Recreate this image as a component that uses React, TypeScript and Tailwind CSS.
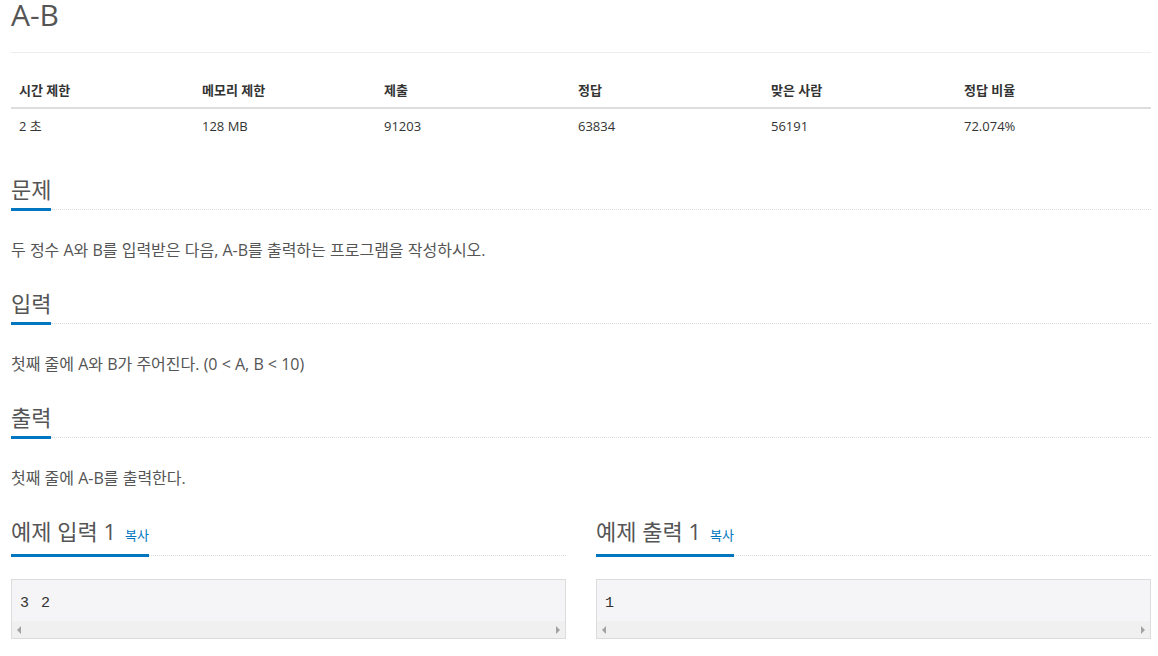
import React from "react";

const FONT = "font-['Open_Sans','Noto_Sans_CJK_KR',sans-serif]";

function Headline({ title, copy }: { title: string; copy?: boolean }) {
  return (
    <div className="flex items-end">
      <span className="border-b-[3px] border-[#0076c0] pb-[2px] text-[22px] leading-[34px] text-[#555] whitespace-nowrap">
        {title}
        {copy && <span className="ml-[9px] text-[13px] text-[#0076c0]">복사</span>}
      </span>
      <div className="flex-1 mb-[1px] border-b border-dotted border-[#d8dde3]" />
    </div>
  );
}

function Section({ title, text }: { title: string; text: string }) {
  return (
    <div className="pb-[25px]">
      <Headline title={title} />
      <p className="mt-[28px] text-[16px] leading-[22px] text-[#555]">{text}</p>
    </div>
  );
}

function Tri({ dir }: { dir: "l" | "r" }) {
  return (
    <svg width="4" height="8" viewBox="0 0 4 8">
      {dir === "l" ? <path d="M4 0 L0 4 L4 8 Z" fill="#a3a3a3" /> : <path d="M0 0 L4 4 L0 8 Z" fill="#a3a3a3" />}
    </svg>
  );
}

function SampleBox({ value }: { value: string }) {
  return (
    <div className="mt-[22px] border border-[#dcdcdc] bg-[#f5f5f7]">
      <div className="h-[41px] pl-[8px] pt-[14px] font-['Liberation_Mono',monospace] text-[15px] leading-[20px] text-[#333] [word-spacing:3px] whitespace-pre">
        {value}
      </div>
      <div className="flex h-[17px] items-center justify-between bg-[#f0f0f0] px-[5px]">
        <Tri dir="l" />
        <Tri dir="r" />
      </div>
    </div>
  );
}

export default function App() {
  const heads = ["시간 제한", "메모리 제한", "제출", "정답", "맞은 사람", "정답 비율"];
  const vals = ["2 초", "128 MB", "91203", "63834", "56191", "72.074%"];
  const widths = ["w-[183px]", "w-[182px]", "w-[194px]", "w-[193px]", "w-[193px]", "w-[195px]"];
  return (
    <div className={`${FONT} bg-white min-h-[656px] w-[1158px] pl-[11px] pr-[7px]`}>
      <h1 className="pt-[1px] text-[30px] leading-[28px] font-normal text-[#555]">A-B</h1>
      <div className="mt-[23px] border-t border-[#eee]" />
      <div className="mt-[20px] text-[13px] leading-[18px]">
        <div className="flex border-b-2 border-[#ddd]">
          {heads.map((h, i) => (
            <div key={h} className={`${widths[i]} shrink-0 p-[8px] font-bold text-[#333]`}>
              {h}
            </div>
          ))}
        </div>
        <div className="flex">
          {vals.map((v, i) => (
            <div key={v} className={`${widths[i]} shrink-0 p-[8px] text-[#333]`}>
              {v}
            </div>
          ))}
        </div>
      </div>
      <div className="mt-[29px]">
        <Section title="문제" text="두 정수 A와 B를 입력받은 다음, A-B를 출력하는 프로그램을 작성하시오." />
        <Section title="입력" text="첫째 줄에 A와 B가 주어진다. (0 < A, B < 10)" />
        <Section title="출력" text="첫째 줄에 A-B를 출력한다." />
        <div className="grid grid-cols-2 gap-[30px]">
          <div>
            <Headline title="예제 입력 1" copy />
            <SampleBox value="3 2" />
          </div>
          <div>
            <Headline title="예제 출력 1" copy />
            <SampleBox value="1" />
          </div>
        </div>
      </div>
    </div>
  );
}
